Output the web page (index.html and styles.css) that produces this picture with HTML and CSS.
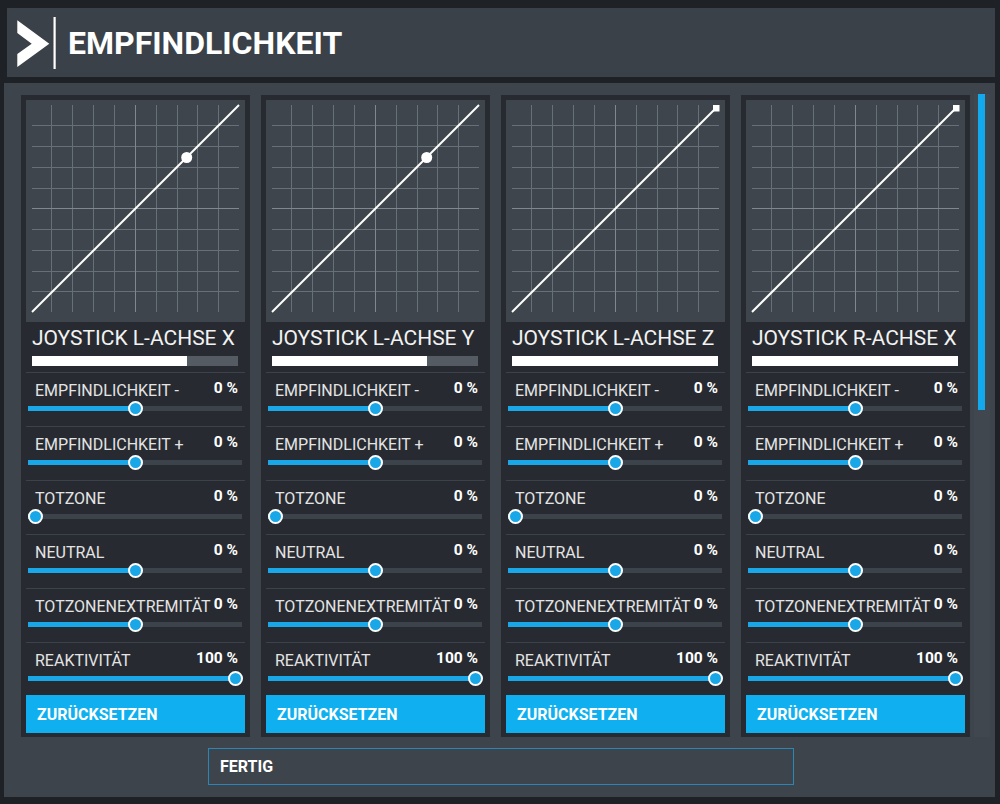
FILE: index.html
```html
<!DOCTYPE html>
<html lang="de">
<head>
<meta charset="utf-8">
<title>Empfindlichkeit</title>
<link rel="stylesheet" href="styles.css">
</head>
<body>
<div class="app">
  <header class="header">
    <svg class="logo" width="40" height="54" viewBox="0 0 40 54">
      <polygon points="0.3,4.3 32.3,27.7 0.3,51 0.3,38 14.7,27.7 0.3,17" fill="#ffffff"/>
      <rect x="36.5" y="1" width="2.2" height="52" fill="#ffffff"/>
    </svg>
    <h1 class="title">EMPFINDLICHKEIT</h1>
  </header>

  <main class="panel">
    <div class="cards-row">

      <section class="card">
        <div class="graph">
          <svg width="219" height="222" viewBox="0 0 219 222">
            <path class="grid" d="M25.5 5V212M46.5 5V212M67.5 5V212M88.5 5V212M130.5 5V212M151.5 5V212M171.5 5V212M192.5 5V212M6 25.5H213M6 46.5H213M6 67.5H213M6 88.5H213M6 129.5H213M6 150.5H213M6 171.5H213M6 191.5H213"/>
            <path class="grid-mid" d="M109.5 5V212M6 108.5H213"/>
            <path class="curve" d="M6 212L213 5"/>
            <circle cx="160.7" cy="57.5" r="5.5" fill="#ffffff"/>
          </svg>
        </div>
        <div class="axis">
          <div class="axis-name">JOYSTICK L-ACHSE X</div>
          <div class="axis-bar"><div class="axis-fill" style="width:75%"></div></div>
        </div>
        <div class="row"><div class="row-head"><span class="label">EMPFINDLICHKEIT -</span><span class="value">0 %</span></div><div class="track" style="--v:0.5"><div class="fill"></div><div class="knob"></div></div></div>
        <div class="row"><div class="row-head"><span class="label">EMPFINDLICHKEIT +</span><span class="value">0 %</span></div><div class="track" style="--v:0.5"><div class="fill"></div><div class="knob"></div></div></div>
        <div class="row"><div class="row-head"><span class="label">TOTZONE</span><span class="value">0 %</span></div><div class="track" style="--v:0"><div class="fill"></div><div class="knob"></div></div></div>
        <div class="row"><div class="row-head"><span class="label">NEUTRAL</span><span class="value">0 %</span></div><div class="track" style="--v:0.5"><div class="fill"></div><div class="knob"></div></div></div>
        <div class="row"><div class="row-head"><span class="label">TOTZONENEXTREMITÄT</span><span class="value">0 %</span></div><div class="track" style="--v:0.5"><div class="fill"></div><div class="knob"></div></div></div>
        <div class="row"><div class="row-head"><span class="label">REAKTIVITÄT</span><span class="value">100 %</span></div><div class="track" style="--v:1"><div class="fill"></div><div class="knob"></div></div></div>
        <button class="reset">ZURÜCKSETZEN</button>
      </section>

      <section class="card">
        <div class="graph">
          <svg width="219" height="222" viewBox="0 0 219 222">
            <path class="grid" d="M25.5 5V212M46.5 5V212M67.5 5V212M88.5 5V212M130.5 5V212M151.5 5V212M171.5 5V212M192.5 5V212M6 25.5H213M6 46.5H213M6 67.5H213M6 88.5H213M6 129.5H213M6 150.5H213M6 171.5H213M6 191.5H213"/>
            <path class="grid-mid" d="M109.5 5V212M6 108.5H213"/>
            <path class="curve" d="M6 212L213 5"/>
            <circle cx="160.7" cy="57.5" r="5.5" fill="#ffffff"/>
          </svg>
        </div>
        <div class="axis">
          <div class="axis-name">JOYSTICK L-ACHSE Y</div>
          <div class="axis-bar"><div class="axis-fill" style="width:75%"></div></div>
        </div>
        <div class="row"><div class="row-head"><span class="label">EMPFINDLICHKEIT -</span><span class="value">0 %</span></div><div class="track" style="--v:0.5"><div class="fill"></div><div class="knob"></div></div></div>
        <div class="row"><div class="row-head"><span class="label">EMPFINDLICHKEIT +</span><span class="value">0 %</span></div><div class="track" style="--v:0.5"><div class="fill"></div><div class="knob"></div></div></div>
        <div class="row"><div class="row-head"><span class="label">TOTZONE</span><span class="value">0 %</span></div><div class="track" style="--v:0"><div class="fill"></div><div class="knob"></div></div></div>
        <div class="row"><div class="row-head"><span class="label">NEUTRAL</span><span class="value">0 %</span></div><div class="track" style="--v:0.5"><div class="fill"></div><div class="knob"></div></div></div>
        <div class="row"><div class="row-head"><span class="label">TOTZONENEXTREMITÄT</span><span class="value">0 %</span></div><div class="track" style="--v:0.5"><div class="fill"></div><div class="knob"></div></div></div>
        <div class="row"><div class="row-head"><span class="label">REAKTIVITÄT</span><span class="value">100 %</span></div><div class="track" style="--v:1"><div class="fill"></div><div class="knob"></div></div></div>
        <button class="reset">ZURÜCKSETZEN</button>
      </section>

      <section class="card">
        <div class="graph">
          <svg width="219" height="222" viewBox="0 0 219 222">
            <path class="grid" d="M25.5 5V212M46.5 5V212M67.5 5V212M88.5 5V212M130.5 5V212M151.5 5V212M171.5 5V212M192.5 5V212M6 25.5H213M6 46.5H213M6 67.5H213M6 88.5H213M6 129.5H213M6 150.5H213M6 171.5H213M6 191.5H213"/>
            <path class="grid-mid" d="M109.5 5V212M6 108.5H213"/>
            <path class="curve" d="M6 212L210 8"/>
            <rect x="207" y="5" width="6.5" height="6.5" fill="#ffffff"/>
          </svg>
        </div>
        <div class="axis">
          <div class="axis-name">JOYSTICK L-ACHSE Z</div>
          <div class="axis-bar"><div class="axis-fill" style="width:100%"></div></div>
        </div>
        <div class="row"><div class="row-head"><span class="label">EMPFINDLICHKEIT -</span><span class="value">0 %</span></div><div class="track" style="--v:0.5"><div class="fill"></div><div class="knob"></div></div></div>
        <div class="row"><div class="row-head"><span class="label">EMPFINDLICHKEIT +</span><span class="value">0 %</span></div><div class="track" style="--v:0.5"><div class="fill"></div><div class="knob"></div></div></div>
        <div class="row"><div class="row-head"><span class="label">TOTZONE</span><span class="value">0 %</span></div><div class="track" style="--v:0"><div class="fill"></div><div class="knob"></div></div></div>
        <div class="row"><div class="row-head"><span class="label">NEUTRAL</span><span class="value">0 %</span></div><div class="track" style="--v:0.5"><div class="fill"></div><div class="knob"></div></div></div>
        <div class="row"><div class="row-head"><span class="label">TOTZONENEXTREMITÄT</span><span class="value">0 %</span></div><div class="track" style="--v:0.5"><div class="fill"></div><div class="knob"></div></div></div>
        <div class="row"><div class="row-head"><span class="label">REAKTIVITÄT</span><span class="value">100 %</span></div><div class="track" style="--v:1"><div class="fill"></div><div class="knob"></div></div></div>
        <button class="reset">ZURÜCKSETZEN</button>
      </section>

      <section class="card">
        <div class="graph">
          <svg width="219" height="222" viewBox="0 0 219 222">
            <path class="grid" d="M25.5 5V212M46.5 5V212M67.5 5V212M88.5 5V212M130.5 5V212M151.5 5V212M171.5 5V212M192.5 5V212M6 25.5H213M6 46.5H213M6 67.5H213M6 88.5H213M6 129.5H213M6 150.5H213M6 171.5H213M6 191.5H213"/>
            <path class="grid-mid" d="M109.5 5V212M6 108.5H213"/>
            <path class="curve" d="M6 212L210 8"/>
            <rect x="207" y="5" width="6.5" height="6.5" fill="#ffffff"/>
          </svg>
        </div>
        <div class="axis">
          <div class="axis-name">JOYSTICK R-ACHSE X</div>
          <div class="axis-bar"><div class="axis-fill" style="width:100%"></div></div>
        </div>
        <div class="row"><div class="row-head"><span class="label">EMPFINDLICHKEIT -</span><span class="value">0 %</span></div><div class="track" style="--v:0.5"><div class="fill"></div><div class="knob"></div></div></div>
        <div class="row"><div class="row-head"><span class="label">EMPFINDLICHKEIT +</span><span class="value">0 %</span></div><div class="track" style="--v:0.5"><div class="fill"></div><div class="knob"></div></div></div>
        <div class="row"><div class="row-head"><span class="label">TOTZONE</span><span class="value">0 %</span></div><div class="track" style="--v:0"><div class="fill"></div><div class="knob"></div></div></div>
        <div class="row"><div class="row-head"><span class="label">NEUTRAL</span><span class="value">0 %</span></div><div class="track" style="--v:0.5"><div class="fill"></div><div class="knob"></div></div></div>
        <div class="row"><div class="row-head"><span class="label">TOTZONENEXTREMITÄT</span><span class="value">0 %</span></div><div class="track" style="--v:0.5"><div class="fill"></div><div class="knob"></div></div></div>
        <div class="row"><div class="row-head"><span class="label">REAKTIVITÄT</span><span class="value">100 %</span></div><div class="track" style="--v:1"><div class="fill"></div><div class="knob"></div></div></div>
        <button class="reset">ZURÜCKSETZEN</button>
      </section>

      <div class="scroll-track"><div class="scroll-thumb"></div></div>
    </div>

    <div class="footer">
      <button class="done">FERTIG</button>
    </div>
  </main>
</div>
</body>
</html>
```

FILE: styles.css
```css
* { box-sizing: border-box; }

html, body {
  margin: 0;
  padding: 0;
}

body {
  width: 1000px;
  height: 804px;
  background: #1e2227;
  font-family: Roboto, "Liberation Sans", Arial, sans-serif;
  color: #ffffff;
  overflow: hidden;
}

.app {
  display: flex;
  flex-direction: column;
  padding-top: 8px;
}

.header {
  height: 69px;
  margin: 0 5px 0 7px;
  background: #3a4149;
  display: flex;
  align-items: center;
  padding-left: 10px;
}

.logo {
  display: block;
  flex: none;
  margin-top: 1px;
}

.title {
  margin: 0 0 0 11px;
  font-size: 32px;
  font-weight: 700;
  letter-spacing: 0;
  line-height: 40px;
  color: #ffffff;
}

.panel {
  margin: 6px 5px 0 4px;
  height: 714px;
  background: #3e444c;
  display: flex;
  flex-direction: column;
  padding-top: 12px;
}

.cards-row {
  display: flex;
  align-items: flex-start;
  gap: 11px;
  padding-left: 17px;
}

.card {
  width: 229px;
  background: #272b31;
  padding: 5px 5px 4px;
  display: flex;
  flex-direction: column;
}

.graph {
  width: 219px;
  height: 222px;
  background: #3e454c;
}

.graph svg { display: block; }

.grid {
  stroke: #687077;
  stroke-width: 1;
  fill: none;
}

.grid-mid {
  stroke: #80878e;
  stroke-width: 1;
  fill: none;
}

.curve {
  stroke: #ffffff;
  stroke-width: 2;
  fill: none;
}

.axis {
  padding: 5px 7px 6px 6px;
}

.axis-name {
  font-size: 21px;
  line-height: 22px;
  color: #f2f2f2;
  white-space: nowrap;
}

.axis-bar {
  margin-top: 7px;
  height: 10px;
  background: #555b62;
}

.axis-fill {
  height: 100%;
  background: #ffffff;
}

.row {
  height: 54px;
  border-top: 1px solid #3c424a;
  padding: 7px 3px 0 2px;
}

.row:last-of-type {
  height: 53px;
}

.row-head {
  display: flex;
  justify-content: space-between;
  align-items: flex-start;
  padding: 0 4px 0 7px;
  height: 22px;
}

.label {
  font-size: 16px;
  line-height: 22px;
  color: #e4e4e4;
  white-space: nowrap;
}

.value {
  font-size: 15.5px;
  font-weight: 700;
  line-height: 16px;
  color: #ffffff;
  white-space: nowrap;
}

.track {
  position: relative;
  margin-top: 4px;
  height: 5px;
  background: #3d434b;
}

.fill {
  height: 100%;
  width: calc(7px + var(--v) * (100% - 14px));
  background: #19a7e8;
}

.knob {
  position: absolute;
  top: 50%;
  left: calc(7px + var(--v) * (100% - 14px));
  width: 15px;
  height: 15px;
  margin: -7.5px 0 0 -7.5px;
  border-radius: 50%;
  background: #19a7e8;
  border: 2px solid #ffffff;
}

.reset {
  margin: 0;
  height: 38px;
  border: none;
  background: #10aff0;
  color: #ffffff;
  font-family: Roboto, "Liberation Sans", Arial, sans-serif;
  font-size: 16px;
  font-weight: 700;
  text-align: left;
  padding: 0 0 0 11px;
}

.scroll-track {
  margin-left: -7px;
  width: 16px;
  height: 643px;
  background: #41474f;
  padding-left: 4px;
  margin-top: -1px;
}

.scroll-thumb {
  width: 7px;
  height: 316px;
  background: #12a9ee;
}

.footer {
  padding: 11px 0 0 204px;
}

.done {
  width: 586px;
  height: 37px;
  margin: 0;
  background: transparent;
  border: 1px solid #2a86b6;
  color: #ffffff;
  font-family: Roboto, "Liberation Sans", Arial, sans-serif;
  font-size: 16px;
  font-weight: 700;
  text-align: left;
  padding: 0 0 0 11px;
}
```
